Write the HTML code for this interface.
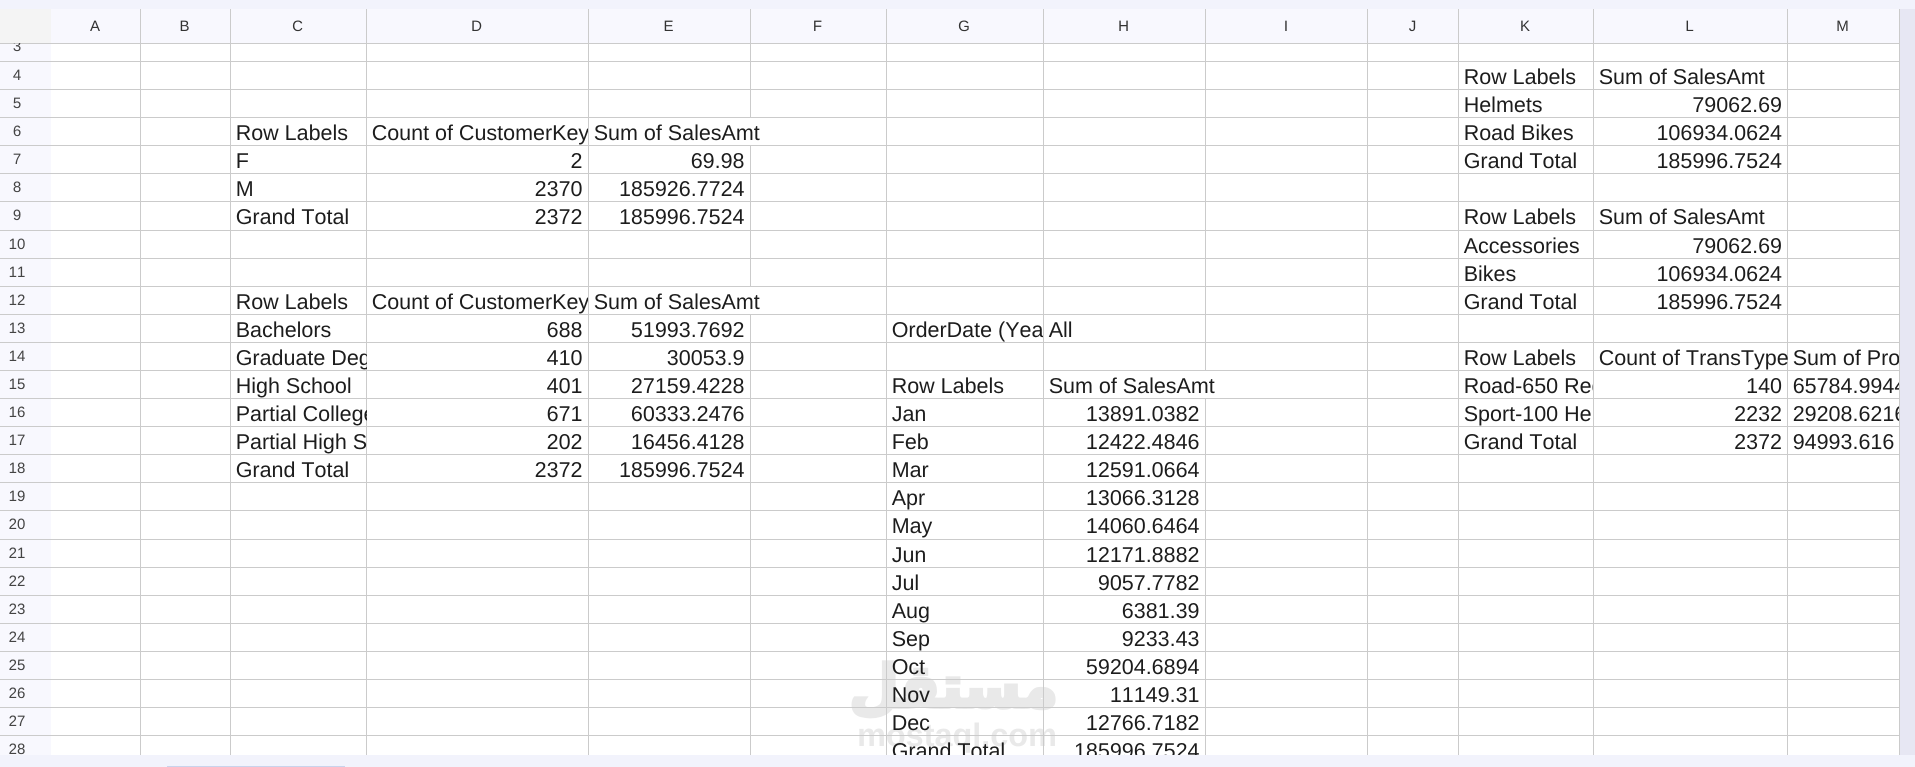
<!DOCTYPE html>
<html lang="en"><head><meta charset="utf-8"><title>Sheet</title>
<style>
html,body{margin:0;padding:0;width:1915px;height:767px;overflow:hidden;background:#fff}
body{position:relative;font-family:"Liberation Sans",sans-serif;color:#1c1c1c;text-rendering:geometricPrecision;font-kerning:none}
.band{position:absolute;background:#f2f3fc}
#head{position:absolute;left:51px;top:9px;width:1848px;height:34px;background:#f8f8fe}
#corner{position:absolute;left:0;top:9px;width:51px;height:34px;background:#f4f4f4}
#gut{position:absolute;left:0;top:43px;width:51px;height:712px;background:#f8f8fe}
.hl{position:absolute;top:9px;height:34px;line-height:35px;text-align:center;font-size:15px;color:#333;transform:translateX(-.5px)}
.v{position:absolute;top:9px;height:746px;width:1px;background:#cbcbcb}
#grid{position:absolute;left:0;top:43px;width:1899px;height:712px;overflow:hidden}
.r{position:absolute;left:0;width:1899px;height:28px;border-top:1px solid #cbcbcb;box-sizing:content-box}
.n{position:absolute;left:0;width:34px;top:1px;height:26px;line-height:26px;text-align:center;font-size:15px;color:#444}
.c{position:absolute;top:1px;height:27px;line-height:28px;font-size:21.5px;white-space:nowrap;overflow:hidden;box-sizing:border-box;padding:0 4.5px 0 4.7px}
.rt{text-align:right;padding-right:5.5px}
.o{overflow:visible}
.p{position:absolute;top:0;width:4px;height:28px;background:#fff}
.cC{left:231px;width:135.5px}.cD{left:367px;width:221px}.cE{left:589px;width:161px}
.cG{left:887px;width:156px}.cH{left:1044px;width:161px}
.cK{left:1459px;width:134px}.cL{left:1594px;width:193.5px}.cM{left:1788px;width:111px}
#wm{position:absolute;left:840px;top:640px;width:240px;height:115px;overflow:hidden;color:#e9e9e9}
#wm .a{position:absolute;left:26px;top:7px;width:200px;text-align:center;font-family:"DejaVu Sans",sans-serif;font-weight:bold;font-size:62px;line-height:80px;-webkit-text-stroke:4px #e9e9e9;direction:rtl;white-space:nowrap;transform:scale(.92,.95)}
#wm .b{position:absolute;left:17px;top:77px;width:200px;text-align:center;font-weight:bold;font-size:32.4px;line-height:36px;white-space:nowrap}
#thumb{position:absolute;left:167px;top:765.5px;width:178px;height:2px;background:#c9d3ec}
#sb{position:absolute;left:1899px;top:9px;width:16px;height:746px;background:#e7e7f3}
</style></head><body>
<div class="band" style="left:0;top:0;width:1915px;height:9px"></div>
<div class="band" style="left:0;top:755px;width:1915px;height:12px"></div>
<div id="thumb"></div>
<div id="sb"></div>
<div id="corner"></div><div id="head"></div><div id="gut"></div>
<div id="wm"><div class="a" lang="ar">مستقل</div><div class="b">mostaql.com</div></div>

<div class="v" style="left:140px"></div>
<div class="v" style="left:230px"></div>
<div class="v" style="left:366px"></div>
<div class="v" style="left:588px"></div>
<div class="v" style="left:750px"></div>
<div class="v" style="left:886px"></div>
<div class="v" style="left:1043px"></div>
<div class="v" style="left:1205px"></div>
<div class="v" style="left:1367px"></div>
<div class="v" style="left:1458px"></div>
<div class="v" style="left:1593px"></div>
<div class="v" style="left:1787px"></div>
<div class="v" style="left:1899px"></div>

<div class="hl" style="left:51px;width:89px">A</div>
<div class="hl" style="left:140px;width:90px">B</div>
<div class="hl" style="left:230px;width:136px">C</div>
<div class="hl" style="left:366px;width:222px">D</div>
<div class="hl" style="left:588px;width:162px">E</div>
<div class="hl" style="left:750px;width:136px">F</div>
<div class="hl" style="left:886px;width:157px">G</div>
<div class="hl" style="left:1043px;width:162px">H</div>
<div class="hl" style="left:1205px;width:163px">I</div>
<div class="hl" style="left:1368px;width:90px">J</div>
<div class="hl" style="left:1458px;width:135px">K</div>
<div class="hl" style="left:1593px;width:194px">L</div>
<div class="hl" style="left:1787px;width:112px">M</div>

<div id="grid">
<div class="r" style="top:0;height:0"></div>
<div class="r" style="top:-10px;border:0"><div class="n">3</div></div>
<div class="r" style="top:18px"><div class="n">4</div><div class="c cK">Row Labels</div><div class="c cL">Sum of SalesAmt</div></div>
<div class="r" style="top:46px"><div class="n">5</div><div class="c cK">Helmets</div><div class="c cL rt">79062.69</div></div>
<div class="r" style="top:74px"><div class="n">6</div><div class="c cC">Row Labels</div><div class="c cD">Count of CustomerKey</div><div class="p" style="left:749px"></div><div class="c cE o">Sum of SalesAmt</div><div class="c cK">Road Bikes</div><div class="c cL rt">106934.0624</div></div>
<div class="r" style="top:102px"><div class="n">7</div><div class="c cC">F</div><div class="c cD rt">2</div><div class="c cE rt">69.98</div><div class="c cK">Grand Total</div><div class="c cL rt">185996.7524</div></div>
<div class="r" style="top:130px"><div class="n">8</div><div class="c cC">M</div><div class="c cD rt">2370</div><div class="c cE rt">185926.7724</div></div>
<div class="r" style="top:158px"><div class="n">9</div><div class="c cC">Grand Total</div><div class="c cD rt">2372</div><div class="c cE rt">185996.7524</div><div class="c cK">Row Labels</div><div class="c cL">Sum of SalesAmt</div></div>
<div class="r" style="top:187px"><div class="n">10</div><div class="c cK">Accessories</div><div class="c cL rt">79062.69</div></div>
<div class="r" style="top:215px"><div class="n">11</div><div class="c cK">Bikes</div><div class="c cL rt">106934.0624</div></div>
<div class="r" style="top:243px"><div class="n">12</div><div class="c cC">Row Labels</div><div class="c cD">Count of CustomerKey</div><div class="p" style="left:749px"></div><div class="c cE o">Sum of SalesAmt</div><div class="c cK">Grand Total</div><div class="c cL rt">185996.7524</div></div>
<div class="r" style="top:271px"><div class="n">13</div><div class="c cC">Bachelors</div><div class="c cD rt">688</div><div class="c cE rt">51993.7692</div><div class="c cG">OrderDate (Year)</div><div class="c cH">All</div></div>
<div class="r" style="top:299px"><div class="n">14</div><div class="c cC">Graduate Degree</div><div class="c cD rt">410</div><div class="c cE rt">30053.9</div><div class="c cK">Row Labels</div><div class="c cL">Count of TransType</div><div class="c cM">Sum of ProductCost</div></div>
<div class="r" style="top:327px"><div class="n">15</div><div class="c cC">High School</div><div class="c cD rt">401</div><div class="c cE rt">27159.4228</div><div class="c cG">Row Labels</div><div class="p" style="left:1204px"></div><div class="c cH o">Sum of SalesAmt</div><div class="c cK">Road-650 Red</div><div class="c cL rt">140</div><div class="c cM">65784.9944</div></div>
<div class="r" style="top:355px"><div class="n">16</div><div class="c cC">Partial College</div><div class="c cD rt">671</div><div class="c cE rt">60333.2476</div><div class="c cG">Jan</div><div class="c cH rt">13891.0382</div><div class="c cK">Sport-100 Helmet</div><div class="c cL rt">2232</div><div class="c cM">29208.6216</div></div>
<div class="r" style="top:383px"><div class="n">17</div><div class="c cC">Partial High School</div><div class="c cD rt">202</div><div class="c cE rt">16456.4128</div><div class="c cG">Feb</div><div class="c cH rt">12422.4846</div><div class="c cK">Grand Total</div><div class="c cL rt">2372</div><div class="c cM">94993.616</div></div>
<div class="r" style="top:411px"><div class="n">18</div><div class="c cC">Grand Total</div><div class="c cD rt">2372</div><div class="c cE rt">185996.7524</div><div class="c cG">Mar</div><div class="c cH rt">12591.0664</div></div>
<div class="r" style="top:439px"><div class="n">19</div><div class="c cG">Apr</div><div class="c cH rt">13066.3128</div></div>
<div class="r" style="top:467px"><div class="n">20</div><div class="c cG">May</div><div class="c cH rt">14060.6464</div></div>
<div class="r" style="top:496px"><div class="n">21</div><div class="c cG">Jun</div><div class="c cH rt">12171.8882</div></div>
<div class="r" style="top:524px"><div class="n">22</div><div class="c cG">Jul</div><div class="c cH rt">9057.7782</div></div>
<div class="r" style="top:552px"><div class="n">23</div><div class="c cG">Aug</div><div class="c cH rt">6381.39</div></div>
<div class="r" style="top:580px"><div class="n">24</div><div class="c cG">Sep</div><div class="c cH rt">9233.43</div></div>
<div class="r" style="top:608px"><div class="n">25</div><div class="c cG">Oct</div><div class="c cH rt">59204.6894</div></div>
<div class="r" style="top:636px"><div class="n">26</div><div class="c cG">Nov</div><div class="c cH rt">11149.31</div></div>
<div class="r" style="top:664px"><div class="n">27</div><div class="c cG">Dec</div><div class="c cH rt">12766.7182</div></div>
<div class="r" style="top:692px"><div class="n">28</div><div class="c cG">Grand Total</div><div class="c cH rt">185996.7524</div></div>
</div>
</body></html>
